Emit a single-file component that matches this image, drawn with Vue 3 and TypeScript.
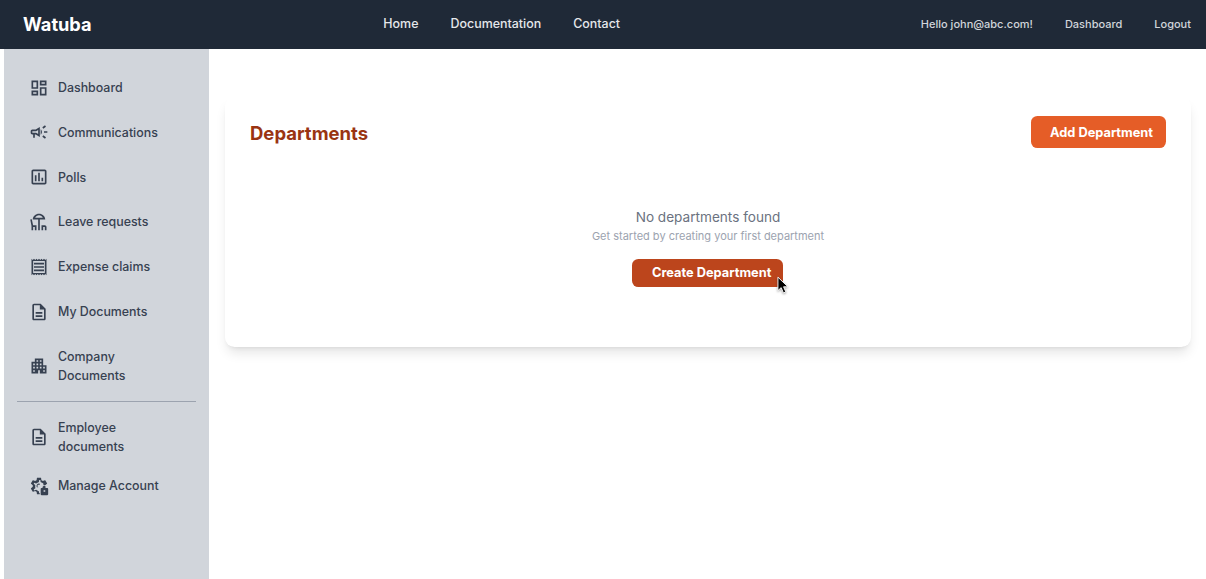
<script setup lang="ts">
interface Item {
  label: string
  path: string
  cls?: string
}
const icons: Record<string, string> = {
  dashboard: 'M19 5v2h-4V5h4M9 5v6H5V5h4m10 8v6h-4v-6h4M9 17v2H5v-2h4M21 3h-8v6h8V3zM11 3H3v10h8V3zm10 8h-8v10h8V11zm-10 4H3v6h8v-6z',
  campaign: 'M18 11v2h4v-2h-4zm-2 6.61c.96.71 2.21 1.65 3.2 2.39.4-.53.8-1.07 1.2-1.6-.99-.74-2.24-1.68-3.2-2.4-.4.54-.8 1.08-1.2 1.61zM20.4 5.6c-.4-.53-.8-1.07-1.2-1.6-.99.74-2.24 1.68-3.2 2.4.4.53.8 1.07 1.2 1.6.96-.72 2.21-1.65 3.2-2.4zM4 9c-1.1 0-2 .9-2 2v2c0 1.1.9 2 2 2h1v4h2v-4h1l5 3V6L8 9H4zm5.03 1.71L11 9.53v4.94l-1.97-1.18-.48-.29H4v-2h4.55l.48-.29zM15.5 12c0-1.33-.58-2.53-1.5-3.35v6.69c.92-.81 1.5-2.01 1.5-3.34z',
  poll: 'M19 3H5c-1.1 0-2 .9-2 2v14c0 1.1.9 2 2 2h14c1.1 0 2-.9 2-2V5c0-1.1-.9-2-2-2zm0 16H5V5h14v14zM7 10h2v7H7zm4-3h2v10h-2zm4 6h2v4h-2z',
  deck: 'M19.500 9C19.500 5 16 2 12 2S4.500 5 4.500 9H11v13h2V9zM12 4c2 0 3.800 1.200 4.600 3H7.400C8.200 5.200 10 4 12 4zM3.400 8.600l-1.900.4 1.500 7.700V22h2v-4h2v4h2v-6H4.900zM15 16v6h2v-4h2v4h2v-4c0-1.100-.9-2-2-2z',
  receipt: 'M19.5 3.500 18 2l-1.500 1.500L15 2l-1.500 1.500L12 2l-1.500 1.500L9 2 7.500 3.500 6 2 4.500 3.500 3 2v20l1.500-1.500L6 22l1.500-1.500L9 22l1.500-1.500L12 22l1.500-1.500L15 22l1.500-1.500L18 22l1.500-1.500L21 22V2l-1.500 1.500zM19 19.090H5V4.910h14v14.180zM6 15h12v2H6zm0-4h12v2H6zm0-4h12v2H6z',
  doc: 'M8 16h8v2H8zm0-4h8v2H8zm6-10H6c-1.100 0-2 .9-2 2v16c0 1.100.89 2 1.990 2H18c1.100 0 2-.9 2-2V8l-6-6zm4 18H6V4h7v5h5v11z',
  apartment: 'M17 11V3H7v4H3v14h8v-4h2v4h8V11h-4zM7 19H5v-2h2v2zm0-4H5v-2h2v2zm0-4H5V9h2v2zm4 4H9v-2h2v2zm0-4H9V9h2v2zm0-4H9V5h2v2zm4 8h-2v-2h2v2zm0-4h-2V9h2v2zm0-4h-2V5h2v2zm4 12h-2v-2h2v2zm0-4h-2v-2h2v2z',
}
const gear = 'M12.900 22H10c-.25 0-.46-.18-.49-.42l-.38-2.650c-.61-.25-1.170-.59-1.690-.98l-2.490 1c-.05.02-.11.03-.17.03-.18 0-.35-.09-.44-.25l-2-3.460c-.12-.22-.07-.49.12-.64l2.110-1.650c-.04-.32-.07-.65-.07-.98 0-.33.03-.66.07-.98L2.460 9.370c-.19-.15-.25-.42-.12-.64l2-3.460c.09-.16.26-.25.43-.25.06 0 .12.01.18.03l2.490 1c.52-.39 1.080-.73 1.690-.98l.38-2.650C9.540 2.180 9.750 2 10 2h4c.25 0 .46.18.49.42l.38 2.650c.61.25 1.170.58 1.690.98l2.490-1c.05-.02.11-.03.17-.03.18 0 .35.09.44.25l2 3.460c.12.22.07.49-.12.64L19.430 11H17.400c-.02-.09-.03-.27-.09-.73l-.14-1.130-.91-.7c-.4-.3-.8-.53-1.230-.71l-1.060-.43-.16-1.130-.19-1.350h-1.390l-.2 1.350-.16 1.130-1.060.43c-.41.17-.82.41-1.250.73l-.9.68-1.040-.42-1.270-.51-.7 1.210 1.080.84.89.7-.14 1.130c-.03.3-.05.53-.05.73s.02.430.05.740l.14 1.130-.89.7-1.080.84.7 1.210 1.270-.51 1.060-.43.91.7c.4.3.8.530 1.230.71l1.060.43.16 1.130.19 1.350h.9zM12 9a3 3 0 0 0-2.600 4.500h1.900A1.500 1.500 0 0 1 12 10.500h1V9.200A3 3 0 0 0 12 9z'

const mainItems: Item[] = [
  { label: 'Dashboard', path: icons.dashboard },
  { label: 'Communications', path: icons.campaign },
  { label: 'Polls', path: icons.poll },
  { label: 'Leave requests', path: icons.deck },
  { label: 'Expense claims', path: icons.receipt },
  { label: 'My Documents', path: icons.doc },
  { label: 'Company Documents', path: icons.apartment, cls: 'wrap' },
]
</script>

<template>
  <div class="page">
    <header class="topbar">
      <div class="brand">Watuba</div>
      <nav class="center-links">
        <a>Home</a>
        <a>Documentation</a>
        <a>Contact</a>
      </nav>
      <div class="right-links">
        <span>Hello john@abc.com!</span>
        <a>Dashboard</a>
        <a>Logout</a>
      </div>
    </header>

    <div class="body-row">
      <aside class="sidebar">
        <ul class="menu">
          <li v-for="item in mainItems" :key="item.label" class="menu-item" :class="item.cls">
            <svg class="icon" viewBox="0 0 24 24"><path :d="item.path" /></svg>
            <span>{{ item.label }}</span>
          </li>
        </ul>
        <hr class="divider" />
        <ul class="menu">
          <li class="menu-item wrap">
            <svg class="icon" viewBox="0 0 24 24"><path :d="icons.doc" /></svg>
            <span>Employee documents</span>
          </li>
          <li class="menu-item compact">
            <svg class="icon" viewBox="0 0 24 24">
              <path :d="gear" />
              <path fill-rule="evenodd" d="M14 15.500a1 1 0 0 1 1-1h1.200v-.8a2.200 2.200 0 0 1 3.600-1.500v2.300H22a1 1 0 0 1 1 1V22a1 1 0 0 1-1 1h-7a1 1 0 0 1-1-1zM17.500 17h2v2h-2z" />
            </svg>
            <span>Manage Account</span>
          </li>
        </ul>
      </aside>

      <main class="content">
        <section class="card">
          <div class="card-head">
            <h1 class="title">Departments</h1>
            <button class="btn btn-add">Add Department</button>
          </div>
          <div class="empty">
            <p class="empty-title">No departments found</p>
            <p class="empty-sub">Get started by creating your first department</p>
            <div class="create-wrap">
              <button class="btn btn-create">Create Department</button>
              <svg class="cursor" viewBox="0 0 14 20" width="13" height="19">
                <path d="M1 1v14.500l3.500-3.200 2.400 5.700 2.600-1.100-2.400-5.500h4.700z" fill="#000" stroke="#fff" stroke-width="1" />
              </svg>
            </div>
          </div>
        </section>
      </main>
    </div>
  </div>
</template>

<style scoped>
.page {
  height: 579px;
  display: flex;
  flex-direction: column;
  overflow: hidden;
  font-family: Inter, "Liberation Sans", sans-serif;
  background: #fff;
}
.topbar {
  height: 49px;
  box-sizing: border-box;
  flex: none;
  background: #1f2937;
  display: flex;
  justify-content: space-between;
  align-items: center;
  padding: 0 15px 1px 23px;
}
.brand {
  color: #fff;
  font-size: 18.200px;
  font-weight: 700;
}
.center-links {
  display: flex;
  gap: 32px;
  margin-right: 9px;
  margin-bottom: 1px;
  color: #e5e7eb;
  font-size: 12.450px;
  font-weight: 500;
}
.right-links {
  display: flex;
  justify-content: flex-end;
  gap: 32px;
  margin-bottom: 1px;
  color: #d1d5db;
  font-size: 11px;
  font-weight: 500;
}
.body-row {
  flex: 1;
  display: flex;
  min-height: 0;
}
.sidebar {
  width: 205px;
  margin-left: 4px;
  flex: none;
  background: #d1d5db;
  padding: 16.100px 13px 0;
  box-sizing: border-box;
}
.menu {
  list-style: none;
  margin: 0;
  padding: 0;
}
.menu-item {
  display: flex;
  align-items: center;
  gap: 8.600px;
  padding: 12.800px 12.400px;
  color: #374151;
  font-size: 12.400px;
  font-weight: 500;
  line-height: 19.200px;
}
.menu-item.wrap span {
  max-width: 100px;
}
.menu-item.compact {
  padding-top: 7px;
  padding-bottom: 6.400px;
}
.icon {
  width: 20px;
  height: 20px;
  margin: -0.400px 0;
  flex: none;
  fill: #374151;
}
.divider {
  border: 0;
  border-top: 1px solid #9ca3af;
  margin: 3px 0;
}
.content {
  flex: 1;
  min-width: 0;
  padding: 48px 15px 0 16px;
}
.card {
  height: 250px;
  box-sizing: border-box;
  background: #fff;
  border-radius: 9.600px;
  padding: 19.200px 25px;
  box-shadow: 0 8px 12px -2px rgba(0, 0, 0, 0.1), 0 3px 5px -3px rgba(0, 0, 0, 0.1);
}
.card-head {
  display: flex;
  align-items: center;
  justify-content: space-between;
  height: 32px;
}
.title {
  margin: 2px 0 0;
  color: #9a3412;
  font-size: 18.500px;
  font-weight: 700;
}
.btn {
  border: 0;
  font-family: inherit;
  color: #fff;
  font-size: 12.800px;
  font-weight: 700;
  cursor: pointer;
}
.btn-add {
  width: 135px;
  height: 32px;
  background: #e55d27;
  border-radius: 6.400px;
  padding: 0 13px 0 19px;
  white-space: nowrap;
}
.empty {
  text-align: center;
  margin-top: 60px;
}
.empty-title {
  margin: 0;
  color: #6b7280;
  font-size: 13.600px;
  line-height: 19.200px;
}
.empty-sub {
  margin: 0;
  color: #9ca3af;
  font-size: 11px;
  line-height: 16px;
  margin-top: 1px;
}
.create-wrap {
  position: relative;
  display: inline-block;
  margin-top: 15px;
  margin-right: 1px;
  line-height: 0;
}
.btn-create {
  width: 151px;
  height: 28px;
  background: #bc451c;
  border-radius: 6.400px;
  padding: 0 12px 2px 20px;
  white-space: nowrap;
}
.cursor {
  position: absolute;
  left: 144.500px;
  top: 17px;
  filter: drop-shadow(0 1px 1px rgba(0, 0, 0, 0.35));
}
</style>

<style>
html, body {
  margin: 0;
  background: #fff;
}
</style>
